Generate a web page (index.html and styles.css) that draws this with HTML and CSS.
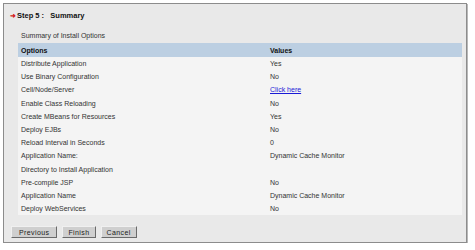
FILE: index.html
```html
<!DOCTYPE html>
<html lang="en">
<head>
    <meta charset="UTF-8">
    <title>Install New Application: Summary</title>
    <link rel="stylesheet" href="styles.css">
</head>
<body>
    <div class="panel">
        <div class="panel-title">
            <span class="arrow">&#10140;</span>Step 5 :&nbsp;&nbsp; Summary
        </div>

        <p class="intro">Summary of Install Options</p>

        <table class="summary">
            <tr>
                <th class="col-option">Options</th>
                <th>Values</th>
            </tr>
            <tr><td>Distribute Application</td><td>Yes</td></tr>
            <tr><td>Use Binary Configuration</td><td>No</td></tr>
            <tr><td>Cell/Node/Server</td><td><a href="#">Click here</a></td></tr>
            <tr><td>Enable Class Reloading</td><td>No</td></tr>
            <tr><td>Create MBeans for Resources</td><td>Yes</td></tr>
            <tr><td>Deploy EJBs</td><td>No</td></tr>
            <tr><td>Reload Interval in Seconds</td><td>0</td></tr>
            <tr><td>Application Name:</td><td>Dynamic Cache Monitor</td></tr>
            <tr><td>Directory to Install Application</td><td></td></tr>
            <tr><td>Pre-compile JSP</td><td>No</td></tr>
            <tr><td>Application Name</td><td>Dynamic Cache Monitor</td></tr>
            <tr><td>Deploy WebServices</td><td>No</td></tr>
        </table>

        <div class="buttons">
            <button type="button" class="btn btn-wide">Previous</button>
            <button type="button" class="btn">Finish</button>
            <button type="button" class="btn">Cancel</button>
        </div>
    </div>
</body>
</html>
```

FILE: styles.css
```css
body {
    margin: 0;
    padding: 0;
    background-color: #ffffff;
    font-family: "Liberation Sans", Arial, sans-serif;
    font-size: 7px;
    color: #333333;
}

.panel {
    margin: 3px 0 0 3px;
    width: 462px;
    height: 238px;
    border: 1px solid #8c8c8c;
    background-color: #e9e9e9;
    box-shadow: 1px 1px 0 #b8b8b8;
}

.panel-title {
    height: 20px;
    padding: 7px 0 0 6px;
    box-sizing: border-box;
    font-weight: bold;
    font-size: 7.5px;
    color: #111111;
}

.arrow {
    color: #d42020;
    font-size: 7px;
    margin-right: 1px;
}

.intro {
    margin: 5px 0 0 17px;
    height: 13px;
    line-height: 13px;
}

.summary {
    margin: 1px 0 0 14px;
    width: 444px;
    border-collapse: collapse;
    background-color: #f4f4f4;
}

.summary th {
    height: 14px;
    padding: 0 0 0 3px;
    text-align: left;
    font-weight: bold;
    color: #111111;
    background-color: #bccfe2;
}

.summary td {
    height: 13.2px;
    padding: 0 0 0 3px;
    line-height: 13.2px;
}

.col-option {
    width: 246px;
}

.summary a {
    color: #1a1ad6;
}

.buttons {
    display: flex;
    gap: 5px;
    margin: 11px 0 0 7px;
}

.btn {
    height: 12px;
    padding: 0 5px;
    font-family: "Liberation Sans", Arial, sans-serif;
    font-size: 7px;
    letter-spacing: 0.4px;
    color: #222222;
    background-color: #cfcfcf;
    border: 1px solid;
    border-color: #f0f0f0 #6a6a6a #6a6a6a #f0f0f0;
}

.btn-wide {
    padding: 0 7px;
}
```
